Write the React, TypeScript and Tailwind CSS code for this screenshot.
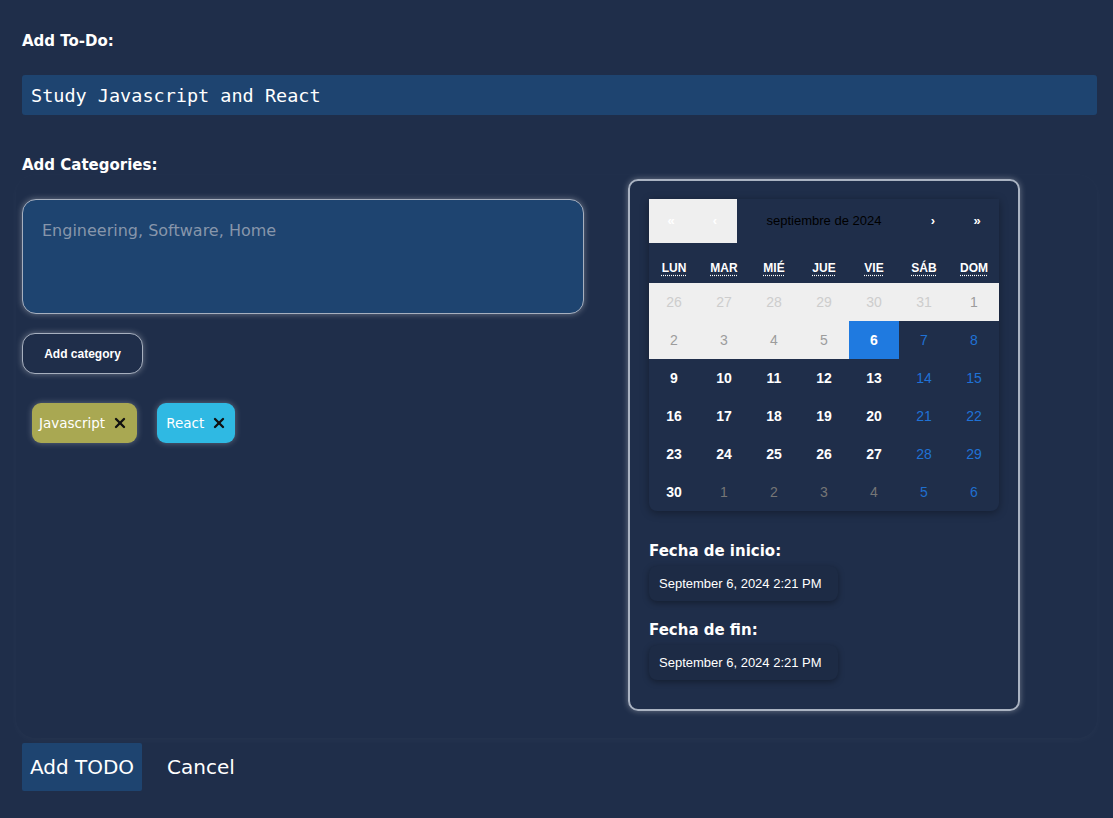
import { X } from 'lucide-react';

const weekdays = ['LUN', 'MAR', 'MIÉ', 'JUE', 'VIE', 'SÁB', 'DOM'];

type Day = { n: number; kind: 'prev' | 'disabled' | 'today' | 'normal' | 'weekend' | 'next' | 'nextWeekend' };

const weeks: Day[][] = [
  [
    { n: 26, kind: 'prev' },
    { n: 27, kind: 'prev' },
    { n: 28, kind: 'prev' },
    { n: 29, kind: 'prev' },
    { n: 30, kind: 'prev' },
    { n: 31, kind: 'prev' },
    { n: 1, kind: 'disabled' },
  ],
  [
    { n: 2, kind: 'disabled' },
    { n: 3, kind: 'disabled' },
    { n: 4, kind: 'disabled' },
    { n: 5, kind: 'disabled' },
    { n: 6, kind: 'today' },
    { n: 7, kind: 'weekend' },
    { n: 8, kind: 'weekend' },
  ],
  [9, 10, 11, 12, 13, 14, 15].map((n, i) => ({ n, kind: i > 4 ? 'weekend' : 'normal' }) as Day),
  [16, 17, 18, 19, 20, 21, 22].map((n, i) => ({ n, kind: i > 4 ? 'weekend' : 'normal' }) as Day),
  [23, 24, 25, 26, 27, 28, 29].map((n, i) => ({ n, kind: i > 4 ? 'weekend' : 'normal' }) as Day),
  [
    { n: 30, kind: 'normal' },
    { n: 1, kind: 'next' },
    { n: 2, kind: 'next' },
    { n: 3, kind: 'next' },
    { n: 4, kind: 'next' },
    { n: 5, kind: 'nextWeekend' },
    { n: 6, kind: 'nextWeekend' },
  ],
];

const dayClass: Record<Day['kind'], string> = {
  prev: 'bg-[#efefef] text-[#cdcdcd]',
  disabled: 'bg-[#efefef] text-[#9c9c9c]',
  today: 'bg-[#1f7ae0] text-white font-bold',
  normal: 'text-white font-bold',
  weekend: 'text-[#1f72d6]',
  next: 'text-[#767676]',
  nextWeekend: 'text-[#1f6fcf]',
};

// Montserrat isn't installed, DejaVu Sans has about its width
const heading = "font-['DejaVu_Sans',sans-serif] font-bold text-white";

function Calendar() {
  return (
    <div className="w-[350px] rounded-b-lg bg-[#1f2e4a] shadow-[0_2px_8px_rgba(0,0,0,0.35)] font-['Liberation_Sans',Arial,sans-serif]">
      {/* navigation */}
      <div className="flex h-[44px] items-center text-[13px]">
        <div className="flex h-full w-[88px] bg-[#efefef] text-white">
          <span className="flex w-[44px] items-center justify-center font-bold">«</span>
          <span className="flex w-[44px] items-center justify-center font-bold">‹</span>
        </div>
        <div className="flex-1 text-center text-black">septiembre de 2024</div>
        <span className="flex w-[44px] items-center justify-center font-bold text-white">›</span>
        <span className="flex w-[44px] items-center justify-center font-bold text-white">»</span>
      </div>
      {/* weekdays */}
      <div className="mt-[10px] grid h-[30px] grid-cols-7 items-center text-[12px] font-bold text-white">
        {weekdays.map((d) => (
          <abbr
            key={d}
            title={d}
            className="text-center underline decoration-dotted underline-offset-[3px]"
          >
            {d}
          </abbr>
        ))}
      </div>
      {weeks.map((w, i) => (
        <div key={i} className="grid grid-cols-7 text-[14px]">
          {w.map((d, j) => (
            <div key={j} className={`flex h-[38px] items-center justify-center ${dayClass[d.kind]}`}>
              {d.n}
            </div>
          ))}
        </div>
      ))}
    </div>
  );
}

function DateBox({ label }: { label: string }) {
  return (
    <div>
      <div className={`${heading} text-[15px] leading-[20px]`}>{label}</div>
      <div className="mt-[5px] flex h-[35px] w-[189px] items-center rounded-lg bg-[#1d2b45] px-[10px] text-[13px] text-white shadow-[0_2px_6px_rgba(0,0,0,0.35)] font-['Liberation_Sans',Arial,sans-serif]">
        September 6, 2024 2:21 PM
      </div>
    </div>
  );
}

export default function App() {
  return (
    <div className="min-h-[818px] bg-[#1f2e4a] pl-[22px] pr-[16px] pt-[31px] font-['DejaVu_Sans',sans-serif]">
      <div className={`${heading} text-[15px] leading-[20px]`}>Add To-Do:</div>
      <input
        defaultValue="Study Javascript and React"
        className="mt-[24px] block h-[40px] w-full rounded-[3px] bg-[#1e4470] px-[9px] text-[18.5px] text-white outline-none font-['DejaVu_Sans_Mono',monospace]"
      />

      <div className={`${heading} mt-[40px] text-[15px] leading-[20px]`}>Add Categories:</div>

      <div className="-ml-[6px] flex h-[563px] rounded-[20px] pl-[6px] shadow-[0_2px_10px_rgba(255,255,255,0.03)]">
        {/* left column */}
        <div className="w-[562px] pt-[24px]">
          <textarea
            placeholder="Engineering, Software, Home"
            className="block h-[115px] w-full resize-none rounded-[14px] border-[1.5px] border-[#a7b0bf] bg-[#1e4470] px-[19px] py-[19px] text-[16px] text-white shadow-[0_0_6px_rgba(255,255,255,0.35)] outline-none placeholder:text-[#8796ab]"
          />
          <button className="mt-[19px] flex h-[41px] w-[121px] items-center justify-center rounded-[13px] border-[1.5px] border-[#a7b0bf] bg-[#1f2e4a] text-[12px] font-bold text-white shadow-[0_0_6px_rgba(255,255,255,0.35)] font-['Liberation_Sans',Arial,sans-serif]">
            Add category
          </button>
          <div className="mt-[29px] flex gap-[20px] pl-[10px]">
            <span className="flex h-[40px] items-center gap-[7px] rounded-[9px] bg-[#a9a852] pl-[7px] pr-[9px] text-[13.5px] text-white shadow-[0_0_6px_rgba(255,255,255,0.3)]">
              Javascript
              <X size={16} strokeWidth={3.5} className="text-[#111]" />
            </span>
            <span className="flex h-[40px] items-center gap-[7px] rounded-[9px] bg-[#2fb9e3] pl-[9px] pr-[8px] text-[13.5px] text-white shadow-[0_0_6px_rgba(255,255,255,0.3)]">
              React
              <X size={16} strokeWidth={3.5} className="text-[#111]" />
            </span>
          </div>
        </div>

        {/* right column */}
        <div className="ml-[44px] mt-[4px] flex h-[532px] w-[392px] flex-col gap-[30px] rounded-[10px] border-2 border-[#aab3c2] px-[19px] pt-[18px] shadow-[0_0_6px_rgba(255,255,255,0.35)]">
          <Calendar />
          <div className="flex flex-col gap-[19px]">
            <DateBox label="Fecha de inicio:" />
            <DateBox label="Fecha de fin:" />
          </div>
        </div>
      </div>

      <div className="mt-[5px] flex items-center gap-[25px] pb-[27px]">
        <button className="h-[48px] w-[120px] rounded-[2px] bg-[#1e4470] text-[20px] text-white">Add TODO</button>
        <button className="text-[20px] text-white">Cancel</button>
      </div>
    </div>
  );
}
